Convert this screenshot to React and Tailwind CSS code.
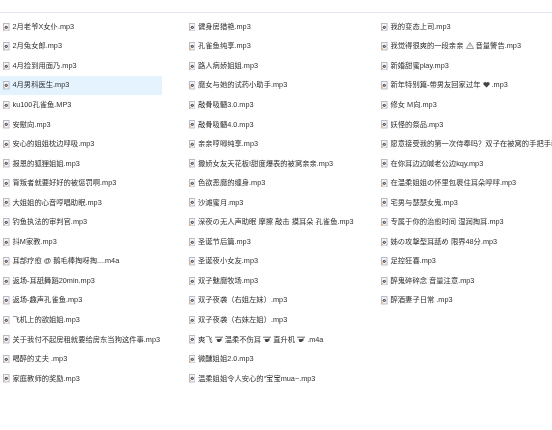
const FILES = [
  "2月老爷X女仆.mp3",
  "2月兔女郎.mp3",
  "4月捡到用面乃.mp3",
  "4月男科医生.mp3",
  "ku100孔雀鱼.MP3",
  "安慰向.mp3",
  "安心的姐姐枕边呼吸.mp3",
  "报恩的狐狸姐姐.mp3",
  "背叛者就要好好的被惩罚啊.mp3",
  "大姐姐的心音哼唱助眠.mp3",
  "钓鱼执法的审判官.mp3",
  "抖M家教.mp3",
  "耳部疗愈 @ 鹅毛棒掏呀掏....m4a",
  "返场-耳舐舞蹈20min.mp3",
  "返场-趣声孔雀鱼.mp3",
  "飞机上的欲姐姐.mp3",
  "关于我付不起房租就要给房东当狗这件事.mp3",
  "喝醉的丈夫 .mp3",
  "家庭教师的奖励.mp3",
  "健身房猎艳.mp3",
  "孔雀鱼纯享.mp3",
  "路人病娇姐姐.mp3",
  "魔女与她的试药小助手.mp3",
  "敲骨吸髓3.0.mp3",
  "敲骨吸髓4.0.mp3",
  "亲亲哼唧纯享.mp3",
  "撒娇女友天花板!甜度爆表的被窝亲亲.mp3",
  "色欲恶魔的缠身.mp3",
  "沙滩蜜月.mp3",
  "深夜の无人声助眠 摩擦 敲击 摸耳朵 孔雀鱼.mp3",
  "圣诞节后篇.mp3",
  "圣诞夜小女友.mp3",
  "双子魅魔牧场.mp3",
  "双子夜袭（右姐左妹）.mp3",
  "双子夜袭（右妹左姐）.mp3",
  ["爽飞 ", "heli", " 温柔不伤耳 ", "heli", " 直升机 ", "heli", " .m4a"],
  "微醺姐姐2.0.mp3",
  "温柔姐姐令人安心的“宝宝mua~.mp3",
  "我的变态上司.mp3",
  ["我觉得很爽的一段亲亲 ", "warn", " 音量警告.mp3"],
  "新婚甜蜜play.mp3",
  ["新年特别篇-带男友回家过年 ", "heart", " .mp3"],
  "修女 M向.mp3",
  "妖怪的祭品.mp3",
  "愿意接受我的第一次侍奉吗？双子在被窝的手把手教",
  "在你耳边边喊老公边kqy.mp3",
  "在温柔姐姐の怀里包裹住耳朵呼呼.mp3",
  "宅男与瑟瑟女鬼.mp3",
  "专属于你的治愈时间 湿润掏耳.mp3",
  "姊の攻撃型耳舐め 限界48分.mp3",
  "足控狂喜.mp3",
  "醉鬼碎碎念 音量注意.mp3",
  "醉酒妻子日常 .mp3",
];

function AudioIcon() {
  return (
    <svg width="6.5" height="8.5" viewBox="0 0 7 9" className="shrink-0">
      <rect x="0.5" y="0.5" width="6" height="8" fill="#f6f6f8" stroke="#b4b7c0" />
      <circle cx="3.5" cy="4.6" r="1.7" fill="#5a4a60" />
      <circle cx="3.5" cy="4.6" r="0.6" fill="#eadfca" />
      <path d="M1 6.9h1" stroke="#d9822b" strokeWidth="0.7" />
    </svg>
  );
}

function Glyph({ name }) {
  if (name === "heli") {
    return (
      <svg width="8" height="7" viewBox="0 0 8 7" className="inline align-[-1px]">
        <path d="M0 1.2h8" stroke="#444" strokeWidth="0.8" />
        <path d="M1.5 3h3.5l1.5-1v2.5l-2 1.5H2.5z" fill="#444" />
      </svg>
    );
  }
  if (name === "warn") {
    return (
      <svg width="8" height="7" viewBox="0 0 8 7" className="inline align-[-1px]">
        <path d="M4 .6 7.6 6.5H.4z" fill="none" stroke="#555" strokeWidth="0.6" />
        <path d="M4 2.5v2.2" stroke="#555" strokeWidth="0.6" />
      </svg>
    );
  }
  return (
    <svg width="7" height="7" viewBox="0 0 7 7" className="inline align-[-1px]">
      <path d="M3.5 6.6.5 3.4C-.4 1.600 2.400-.2 3.500 1.700 4.600-.2 7.400 1.600 6.500 3.400z" fill="#444" />
    </svg>
  );
}

function FileRow({ name, selected }) {
  const parts = Array.isArray(name) ? name : [name];
  return (
    <div
      className={`flex h-[19.55px] items-center gap-[3px] pl-[3px] ${
        selected ? "w-[162px] bg-[#e5f3ff]" : ""
      }`}
    >
      <AudioIcon />
      <span className="whitespace-nowrap pt-[1px]">
        {parts.map((p, i) =>
          p === "heli" || p === "warn" || p === "heart" ? (
            <Glyph key={i} name={p} />
          ) : (
            <span key={i}>{p}</span>
          )
        )}
      </span>
    </div>
  );
}

export default function App() {
  return (
    <div className="h-[430px] w-[552px] overflow-hidden bg-white font-['Liberation_Sans','Noto_Sans_CJK_SC',sans-serif] text-[7.3px] text-[#2f2f2f] blur-[0.35px]">
      <div className="h-[13px] border-b border-[#e3e8f0]" />
      <div className="grid grid-flow-col grid-cols-[185.5px_192.5px_174px] grid-rows-[repeat(19,19.55px)] pt-[4px]">
        {FILES.map((f, i) => (
          <FileRow key={i} name={f} selected={i === 3} />
        ))}
      </div>
    </div>
  );
}
